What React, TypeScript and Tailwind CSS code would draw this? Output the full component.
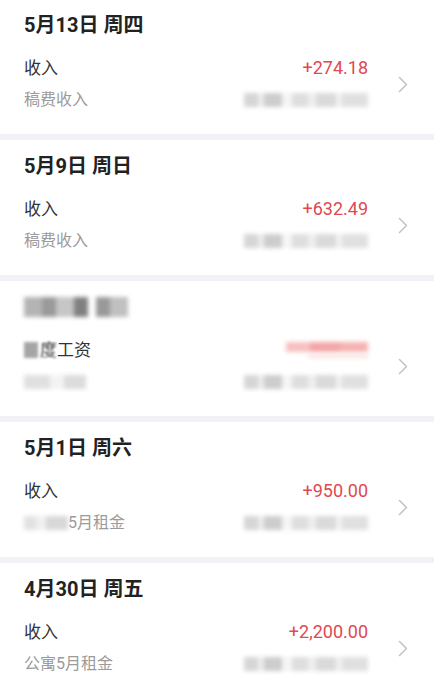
const font = { fontFamily: 'Roboto, "Noto Sans CJK SC", "Noto Sans", sans-serif' };

type Seg = { w: number; c: string };

// pixelated / blurred bits of the original screenshot
function Mosaic({ segs, h = 14 }: { segs: Seg[]; h?: number }) {
  return (
    <div className="flex items-center blur-[2px]">
      {segs.map((s, i) => (
        <div key={i} className={`${s.c} shrink-0`} style={{ width: s.w, height: h }} />
      ))}
    </div>
  );
}

const accountBlur: Seg[] = [
  { w: 14, c: 'bg-[#d6d6d6]' },
  { w: 6, c: 'bg-[#ececec]' },
  { w: 18, c: 'bg-[#cdcdcd]' },
  { w: 10, c: 'bg-[#f5f5f5]' },
  { w: 16, c: 'bg-[#dedede]' },
  { w: 8, c: 'bg-[#eeeeee]' },
  { w: 20, c: 'bg-[#dadada]' },
  { w: 6, c: 'bg-[#f1f1f1]' },
  { w: 26, c: 'bg-[#e0e0e0]' },
];

function Chevron() {
  return (
    <svg width="10" height="17" viewBox="0 0 10 17" fill="none">
      <path d="M1.5 1.5 L8.5 8.5 L1.5 15.5" stroke="#c2c2c2" strokeWidth="1.5" strokeLinecap="round" strokeLinejoin="round" />
    </svg>
  );
}

interface Entry {
  date?: string;
  label: React.ReactNode;
  amount: React.ReactNode;
  note: React.ReactNode;
}

const entries: Entry[] = [
  { date: '5月13日 周四', label: '收入', amount: '+274.18', note: '稿费收入' },
  { date: '5月9日 周日', label: '收入', amount: '+632.49', note: '稿费收入' },
  {
    label: (
      <span className="flex items-center">
        <span className="w-[14px] h-[16px] bg-[#a5a5a5] blur-[1.5px] mr-[2px]" />
        <span className="blur-[0.8px]">度</span>工资
      </span>
    ),
    amount: (
      <div className="flex flex-col items-end gap-[2px]">
        <Mosaic h={10} segs={[{ w: 24, c: 'bg-[#f7c0c0]' }, { w: 30, c: 'bg-[#f4a6a6]' }, { w: 28, c: 'bg-[#f6b2b2]' }]} />
        <Mosaic h={4} segs={[{ w: 60, c: 'bg-[#f8e2e2]' }]} />
      </div>
    ),
    note: <Mosaic segs={[{ w: 26, c: 'bg-[#e0e0e0]' }, { w: 14, c: 'bg-[#f3f3f3]' }, { w: 22, c: 'bg-[#dcdcdc]' }]} />,
  },
  {
    date: '5月1日 周六',
    label: '收入',
    amount: '+950.00',
    note: (
      <span className="flex items-center">
        <Mosaic segs={[{ w: 12, c: 'bg-[#e2e2e2]' }, { w: 10, c: 'bg-[#f0f0f0]' }, { w: 22, c: 'bg-[#d8d8d8]' }]} />
        5月租金
      </span>
    ),
  },
  { date: '4月30日 周五', label: '收入', amount: '+2,200.00', note: '公寓5月租金' },
];

function DayCard({ entry }: { entry: Entry }) {
  return (
    <div className="bg-white pl-6 pr-[26px] pt-[13px] pb-[22px]">
      {entry.date ? (
        <div className="text-[20px] leading-[26px] font-bold text-[#222222]">{entry.date}</div>
      ) : (
        <div className="h-[26px] flex items-center">
          <Mosaic
            h={20}
            segs={[
              { w: 18, c: 'bg-[#b4b4b4]' },
              { w: 14, c: 'bg-[#9a9a9a]' },
              { w: 18, c: 'bg-[#c6c6c6]' },
              { w: 14, c: 'bg-[#808080]' },
              { w: 8, c: 'bg-white' },
              { w: 14, c: 'bg-[#999999]' },
              { w: 18, c: 'bg-[#c0c0c0]' },
            ]}
          />
        </div>
      )}
      <div className="flex items-center mt-[18px]">
        <div className="flex-1 flex flex-col gap-2">
          <div className="text-[17px] leading-6 text-[#333333]">{entry.label}</div>
          <div className="text-[16px] leading-6 text-[#9b9b9b] h-6 flex items-center">{entry.note}</div>
        </div>
        <div className="flex flex-col items-end gap-2">
          <div className="text-[18px] leading-6 text-[#e0494f] h-6 flex items-center">{entry.amount}</div>
          <div className="h-6 flex items-center">
            <Mosaic segs={accountBlur} />
          </div>
        </div>
        <div className="ml-[30px]">
          <Chevron />
        </div>
      </div>
    </div>
  );
}

export default function App() {
  return (
    <div className="w-[434px] h-[689px] overflow-hidden bg-[#f1f2f6]" style={font}>
      <div className="flex flex-col gap-[6px] -mt-[1px]">
        {entries.map((e, i) => (
          <DayCard key={i} entry={e} />
        ))}
      </div>
    </div>
  );
}
